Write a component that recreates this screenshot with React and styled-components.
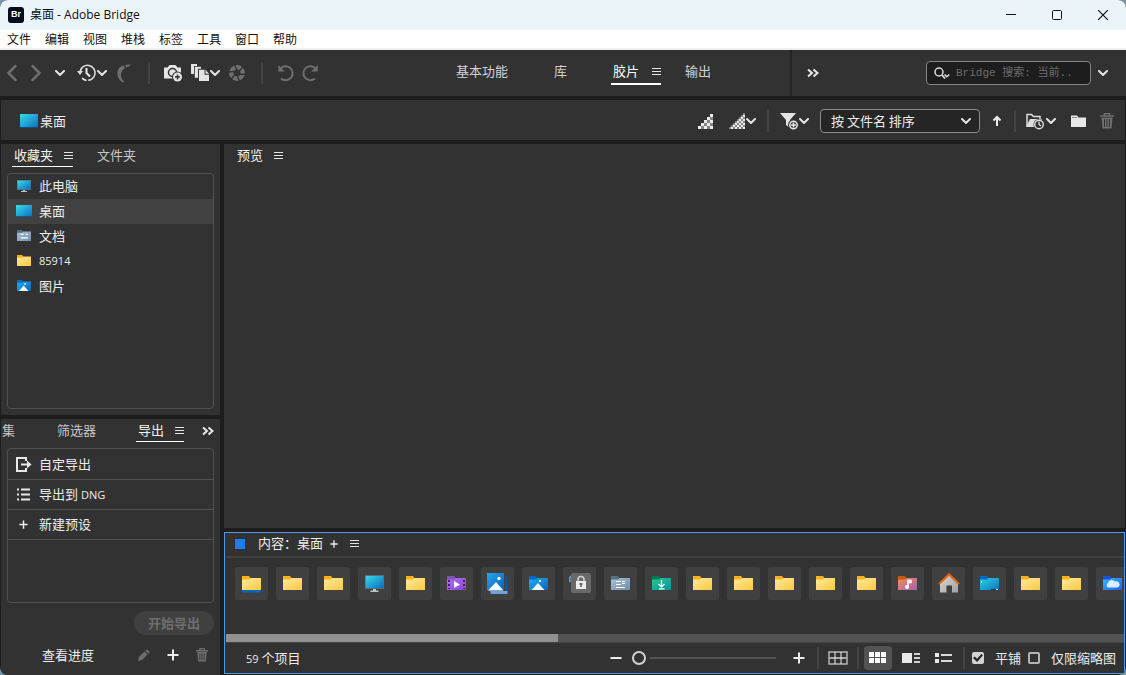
import React from "react";
import styled, { createGlobalStyle } from "styled-components";

// Data
const menuItems = ["文件", "编辑", "视图", "堆栈", "标签", "工具", "窗口", "帮助"];

const favorites = [
  { name: "此电脑", kind: "monitor" },
  { name: "桌面", kind: "desktop", selected: true },
  { name: "文档", kind: "documents" },
  { name: "85914", kind: "folder", latin: true },
  { name: "图片", kind: "pictures" },
];

const thumbnails = [
  "folderBlue", "folder", "folder", "monitor", "folder", "videos", "gallery",
  "pictures", "lock", "documents", "downloads", "folder", "folder", "folder",
  "folder", "folder", "music", "home", "desktopFolder", "folder", "folder",
  "cloud",
];

// Small glyphs
const Chevron = () => (
  <Glyph width="10" height="6" viewBox="0 0 10 6">
    <path d="M1 1l4 4 4-4" fill="none" stroke="#e4e4e4" strokeWidth="2" strokeLinecap="round" />
  </Glyph>
);

const Burger = () => (
  <Glyph width="9" height="9" viewBox="0 0 9 9">
    <path d="M0 1.5h9M0 4.5h9M0 7.5h9" stroke="#e4e4e4" strokeWidth="1" />
  </Glyph>
);

const DoubleChevron = () => (
  <Glyph width="12" height="10" viewBox="0 0 12 10">
    <path d="M1 1.5l4 3.5-4 3.5M6.5 1.5l4 3.5-4 3.5" fill="none" stroke="#e8e8e8" strokeWidth="2" />
  </Glyph>
);

const Plus = ({ size = 12 }) => (
  <Glyph width={size} height={size} viewBox="0 0 12 12">
    <path d="M6 .5v11M.5 6h11" stroke="#ededed" strokeWidth="2" />
  </Glyph>
);

const Minus = () => (
  <Glyph width="12" height="12" viewBox="0 0 12 12">
    <path d="M.5 6h11" stroke="#ededed" strokeWidth="2" />
  </Glyph>
);

const Arrow = ({ back }) => (
  <Glyph width="12" height="18" viewBox="0 0 12 18">
    <path
      d={back ? "M9.5 2l-7 7 7 7" : "M2.5 2l7 7-7 7"}
      fill="none"
      stroke="#6e6e6e"
      strokeWidth="2.5"
      strokeLinecap="round"
    />
  </Glyph>
);

const History = () => (
  <Glyph width="19" height="18" viewBox="0 0 19 18">
    <path d="M3 8.5A7.5 7.5 0 1 1 5 14" fill="none" stroke="#dedede" strokeWidth="1.5" strokeDasharray="34 2" />
    <path d="M5.5 14.5a7.5 7.5 0 0 0 4 2" fill="none" stroke="#dedede" strokeWidth="1.5" />
    <path d="M0 7h6L3 11z" fill="#dedede" />
    <path d="M9.5 4v5l3.5 3.5" fill="none" stroke="#e8e8e8" strokeWidth="2" />
  </Glyph>
);

const Boomerang = () => (
  <Glyph width="14" height="19" viewBox="0 0 14 19">
    <path d="M.5 8C1 4.5 3 2 6.5 1.5L8 4C5 6 3.5 9 4 12c.3 2 1.5 4 3 5.5L5.500 18.5C2 16 0 12 .5 8z" fill="#6e6e6e" />
    <path d="M8 1.2C10 .5 12 .5 14 .8L12.5 2.3 9.2 3.2z" fill="#6e6e6e" />
  </Glyph>
);

const Camera = () => (
  <Glyph width="20" height="18" viewBox="0 0 20 18">
    <path d="M1 3.5h3.5L6.5 1h6l2 2.5H18v11H1z" fill="#e4e4e4" />
    <circle cx="9.5" cy="8.5" r="4" fill="#e4e4e4" stroke="#323232" strokeWidth="1.5" />
    <circle cx="14.5" cy="13" r="5.5" fill="#323232" />
    <circle cx="14.5" cy="13" r="4.5" fill="#e4e4e4" />
    <path d="M14.5 10.5v5M12 13h5" stroke="#323232" strokeWidth="1.5" />
  </Glyph>
);

const Stack = () => (
  <Glyph width="18" height="18" viewBox="0 0 18 18">
    <path d="M0 0h6v2H3v8H0z" fill="#e4e4e4" />
    <path d="M3.8 2.8H10v2H7v9H3.8z" fill="#e4e4e4" />
    <path d="M8 5.8h5.5v5H18V17H8z" fill="#e4e4e4" />
    <path d="M14.5 5.8L18 9.8h-3.5z" fill="#e4e4e4" />
  </Glyph>
);

const Aperture = () => (
  <Glyph width="18" height="18" viewBox="0 0 18 18">
    <circle cx="9" cy="9" r="5.7" fill="none" stroke="#707070" strokeWidth="4.5" />
    <path d="M6 0l3 6M15.5 2l-4 5M18 10l-6.5.5M12 18l-2.5-5.5M2.5 16l4-5M0 8l6.5-.5" stroke="#323232" strokeWidth="1.3" />
  </Glyph>
);

const Rotate = ({ right }) => (
  <Glyph width="18" height="18" viewBox="0 0 18 18">
    <g transform={right ? "translate(18 0) scale(-1 1)" : undefined}>
      <path d="M3 5a7 7 0 1 1 1 9.5" fill="none" stroke="#6e6e6e" strokeWidth="2" />
      <path d="M1 1l.5 6.5H8L5.5 5z" fill="#6e6e6e" />
    </g>
  </Glyph>
);

const Search = () => (
  <Glyph width="16" height="13" viewBox="0 0 16 13">
    <circle cx="5" cy="5" r="4" fill="none" stroke="#dcdcdc" strokeWidth="1.5" />
    <path d="M8 8l3 3.5" stroke="#dcdcdc" strokeWidth="1.8" />
    <path d="M10.5 7.5l2.3 2.2 2.4-2.2" fill="none" stroke="#dcdcdc" strokeWidth="1.5" />
  </Glyph>
);

// A staircase of alternating light and grey squares
const Quality = ({ fine }) => {
  const step = fine ? 2 : 3;
  const n = fine ? 8 : 5;
  const squares = [];
  for (let row = 0; row < n; row++) {
    for (let col = n - 1 - row; col < n; col++) {
      squares.push(
        <rect
          key={`${row}-${col}`}
          x={col * step}
          y={row * step}
          width={step}
          height={step}
          fill={(row + col) % 2 ? "#868686" : "#ececec"}
        />
      );
    }
  }
  return (
    <Glyph width={n * step} height={n * step} viewBox={`0 0 ${n * step} ${n * step}`}>
      {squares}
    </Glyph>
  );
};

const Filter = () => (
  <Glyph width="18" height="18" viewBox="0 0 18 18">
    <path d="M0 1h16L10 8v8L6 13V8z" fill="#e4e4e4" />
    <circle cx="13.5" cy="13" r="5.5" fill="#323232" />
    <circle cx="13.5" cy="13" r="3.7" fill="none" stroke="#e4e4e4" strokeWidth="1.5" />
    <path d="M13.5 10.5v5M11 13h5" stroke="#e4e4e4" strokeWidth="1.6" />
  </Glyph>
);

const UpArrow = () => (
  <Glyph width="10" height="12" viewBox="0 0 10 12">
    <path d="M5 11V2M1.5 5.5L5 2l3.5 3.5" fill="none" stroke="#ededed" strokeWidth="2" />
  </Glyph>
);

const RecentFolder = () => (
  <Glyph width="19" height="17" viewBox="0 0 19 17">
    <path d="M1 13V1.5h4.5l2 2H14v3" fill="none" stroke="#dedede" strokeWidth="1.5" />
    <path d="M0 14L4 6h12v8z" fill="#dedede" />
    <circle cx="13" cy="11.5" r="5.5" fill="#323232" />
    <circle cx="13" cy="11.5" r="4.3" fill="none" stroke="#dedede" strokeWidth="1.4" />
    <path d="M13 8.5v3l2 1.5" fill="none" stroke="#dedede" strokeWidth="1.3" />
  </Glyph>
);

const NewFolder = () => (
  <Glyph width="15" height="13" viewBox="0 0 15 13">
    <path d="M0 .5h6l1.5 2H15V12H0z" fill="#e8e8e8" />
    <path d="M1 2.5h5" stroke="#8a8a8a" />
  </Glyph>
);

const Trash = ({ size = 16 }) => (
  <Glyph width={size - 2} height={size} viewBox="0 0 14 16">
    <path d="M0 3h14M4.5 2.5v-2h5v2" fill="none" stroke="#6e6e6e" strokeWidth="1.6" />
    <path d="M1.5 4.5h11l-1 11h-9z" fill="#6e6e6e" />
    <path d="M4.5 6v8M7 6v8M9.5 6v8" stroke="#323232" strokeWidth="1" />
  </Glyph>
);

const Pencil = () => (
  <Glyph width="12" height="12" viewBox="0 0 12 12">
    <path d="M0 12l1-4 5.5-5.5 3 3L4 11z" fill="#6e6e6e" />
    <path d="M7.3 1.8L9 .3l2.8 2.8-1.5 1.6z" fill="#6e6e6e" />
  </Glyph>
);

const ExportIcon = () => (
  <Glyph width="16" height="15" viewBox="0 0 16 15">
    <path d="M10 4V1H1v13h9v-3" fill="none" stroke="#e8e8e8" strokeWidth="2" />
    <path d="M5 7.5h7" stroke="#e8e8e8" strokeWidth="2" />
    <path d="M11 3.5l4.5 4-4.5 4z" fill="#e8e8e8" />
  </Glyph>
);

const ListIcon = () => (
  <Glyph width="14" height="13" viewBox="0 0 14 13">
    <path d="M0 1.5h2M0 6.5h2M0 11.5h2M4 1.5h9M4 6.5h9M4 11.5h9" stroke="#e8e8e8" strokeWidth="2" />
  </Glyph>
);

const TableIcon = () => (
  <Glyph width="20" height="14" viewBox="0 0 20 14">
    <path d="M1 1h18v12H1z" fill="none" stroke="#b4b4b4" strokeWidth="1.5" />
    <path d="M1 7h18" stroke="#a8a8a8" strokeWidth="2" />
    <path d="M7 1v12M13 1v12" stroke="#ededed" strokeWidth="1" />
  </Glyph>
);

const GridIcon = () => (
  <Glyph width="18" height="12" viewBox="0 0 18 12">
    <path d="M0 0h5v5H0zM6 0h5v5H6zM12 0h5v5h-5zM0 6h5v5H0zM6 6h5v5H6zM12 6h5v5h-5z" fill="#fff" />
  </Glyph>
);

const DetailIcon = () => (
  <Glyph width="18" height="10" viewBox="0 0 18 10">
    <path d="M0 0h10v10H0z" fill="#e8e8e8" />
    <path d="M12 1h6M12 5h6M12 9h6" stroke="#d0d0d0" strokeWidth="2" />
  </Glyph>
);

const RowsIcon = () => (
  <Glyph width="17" height="10" viewBox="0 0 17 10">
    <path d="M0 0h4v4H0zM0 6h4v4H0z" fill="#e8e8e8" />
    <path d="M6 2h11M6 8h11" stroke="#d8d8d8" strokeWidth="2" />
  </Glyph>
);

// Folder, device and place artwork. Folders share one 19x14 outline.
const folderColors = {
  folder: ["#ffe9a2", "#fcc93c", "#f8b01c"],
  folderBlue: ["#ffe9a2", "#fcc93c", "#f8b01c"],
  videos: ["#b070ee", "#8a45d8", "#7a54b8"],
  pictures: ["#22aef0", "#0a64bc", "#0468c4"],
  documents: ["#a9c0d6", "#6f8fae", "#547080"],
  downloads: ["#2ec68c", "#0894a0", "#057a58"],
  music: ["#f58f56", "#a35fb4", "#c05a14"],
  desktopFolder: ["#2fd2de", "#0a76c4", "#0468c4"],
  cloud: ["#35b8f8", "#2460f0", "#2050d8"],
};

const FolderDetail = ({ kind, small }) => {
  switch (kind) {
    case "folderBlue":
      return <path d="M0 14h19v2.5H0z" fill="#0868b8" />;
    case "videos":
      return (
        <>
          <path d="M7 5v7l6-3.5z" fill="#fff" />
          <path d="M2 4v9M17 4v9" stroke="#3f2468" strokeWidth="2" strokeDasharray="2 2" />
        </>
      );
    case "pictures":
      return (
        <>
          <path d="M2.5 14L9 7l6.5 7z" fill="#eef6ff" />
          <rect x="10" y="4" width="2" height="2" fill="#fff" />
        </>
      );
    case "documents":
      return small ? (
        <path d="M5 5.5h4M12 5.5h3M5 10h10" stroke="#fff" strokeWidth="1.7" />
      ) : (
        <path d="M5 5.5h5M5 8.5h5M5 11.5h9M11 5.5h3M11 7.5h3" stroke="#fff" strokeWidth="1.2" />
      );
    case "downloads":
      return <path d="M9.5 4v7M6.5 8l3 3 3-3M7 12.8h5.5" fill="none" stroke="#fff" strokeWidth="1.2" />;
    case "music":
      return (
        <>
          <path d="M10 11V4.5h3v2h-2" fill="none" stroke="#fff" strokeWidth="1.5" />
          <circle cx="9" cy="11" r="2" fill="#fff" />
        </>
      );
    case "desktopFolder":
      return (
        <>
          <path d="M1 5h1v2H1z" fill="#fff" />
          <path d="M11 13h8v1h-8z" fill="#0b3560" />
          <path d="M16 13h2v1h-2z" fill="#fff" />
        </>
      );
    case "cloud":
      return <path d="M5 11.5a2.5 2.5 0 0 1 0-4.5A4 4 0 0 1 12 5.5 3 3 0 0 1 14.5 11.5z" fill="#d8f0ff" />;
    default:
      return null;
  }
};

const Artwork = ({ kind, small, id }) => {
  const fill = `url(#${id})`;
  const gradient = (from, to) => (
    <defs>
      <linearGradient id={id} x1="0" y1="0" x2="1" y2="1">
        <stop offset="0" stopColor={from} />
        <stop offset="1" stopColor={to} />
      </linearGradient>
    </defs>
  );

  if (kind === "desktop") {
    return (
      <Glyph width={small ? 16 : 18} height={small ? 12 : 14} viewBox="0 0 18 14" preserveAspectRatio="none">
        {gradient("#38dce8", "#0a6cc0")}
        <path d="M0 0h18v14H0z" fill={fill} />
        <path d="M0 13h18v1H0z" fill="#0c4a80" />
      </Glyph>
    );
  }
  if (kind === "monitor") {
    return (
      <Glyph width={small ? 14 : 19} height={small ? 12 : 17} viewBox="0 0 19 17" preserveAspectRatio="none">
        {gradient("#38dce8", "#0a6cc0")}
        <path d="M0 0h19v14H0z" fill="#51707c" />
        <path d="M.7 1h17.6v12H.7z" fill={fill} />
        <path d="M8 14h3v1.5h2.5V17h-8v-1.5H8z" fill="#b6c6ce" />
      </Glyph>
    );
  }
  if (kind === "gallery") {
    return (
      <Glyph width="21" height="21" viewBox="0 0 21 21">
        {gradient("#28a4ee", "#0860b4")}
        <path d="M18 3h3v15h-3z" fill="#0656a4" />
        <path d="M3 18h17.5v3H4z" fill="#6ea2dc" />
        <path d="M0 0h17v17.5H0z" fill={fill} />
        <path d="M1 17.5L9 9l7.5 8.5z" fill="#eef6ff" />
        <circle cx="12" cy="5.5" r="1.7" fill="#fff" />
      </Glyph>
    );
  }
  if (kind === "lock") {
    return (
      <Glyph width="22" height="20" viewBox="0 0 22 20">
        <path d="M2 3Q0 5 1 9" fill="none" stroke="#52b4d8" strokeWidth="1.5" />
        <rect x="2" width="20" height="20" rx="2" fill="#696969" />
        <path d="M9 9V6.5a3 3 0 0 1 6 0V9" fill="none" stroke="#d4d4d4" strokeWidth="1.6" />
        <path d="M7 8h10v8H7z" fill="#ececec" />
        <path d="M12 10v4M10.5 11h3" stroke="#5a5a5a" strokeWidth="1.5" />
      </Glyph>
    );
  }
  if (kind === "home") {
    return (
      <Glyph width="22" height="20" viewBox="0 0 22 20">
        {gradient("#d8d8d8", "#a2a2a2")}
        <path d="M2 10l9-8 9 8v9.5h-6V12.5H8.5v7H2z" fill={fill} />
        <path d="M1 11L11 1.5 21 11" fill="none" stroke="#e4680c" strokeWidth="2.2" />
      </Glyph>
    );
  }

  const [from, to, tab] = folderColors[kind];
  const tall = kind === "folderBlue";
  return (
    <Glyph
      width={small ? 14 : 19}
      height={small ? 11 : tall ? 20 : 14}
      viewBox={tall ? "0 -3 19 20" : "0 0 19 14"}
      preserveAspectRatio="none"
    >
      {gradient(from, to)}
      <path d="M0 0h7l1.5 2V4H0z" fill={tab} />
      <path d="M0 3.5h7L8.5 2H19v12H0z" fill={fill} />
      <FolderDetail kind={kind} small={small} />
    </Glyph>
  );
};

// Window chrome
const TitleBar = () => (
  <TitleRow>
    <BrandMark>Br</BrandMark>
    <WindowTitle>桌面 - Adobe Bridge</WindowTitle>
    <WindowButton aria-label="最小化">
      <svg width="10" height="10" viewBox="0 0 10 10"><path d="M0 4.5h10" stroke="#111" /></svg>
    </WindowButton>
    <WindowButton aria-label="最大化">
      <svg width="10" height="10" viewBox="0 0 10 10"><rect x=".5" y=".5" width="9" height="9" rx="1" fill="none" stroke="#111" /></svg>
    </WindowButton>
    <WindowButton aria-label="关闭">
      <svg width="10" height="10" viewBox="0 0 10 10"><path d="M0 0l10 10M10 0L0 10" stroke="#111" strokeWidth="1.2" /></svg>
    </WindowButton>
  </TitleRow>
);

const MainToolbar = () => (
  <Toolbar>
    <ToolGroup>
      <ToolButton aria-label="后退"><Arrow back /></ToolButton>
      <ToolButton aria-label="前进"><Arrow /></ToolButton>
      <ToolButton aria-label="转到父项"><Chevron /></ToolButton>
      <ToolButton $wide aria-label="最近使用"><History /><Chevron /></ToolButton>
      <ToolButton aria-label="返回 Photoshop"><Boomerang /></ToolButton>
      <Divider $spaced />
      <ToolButton aria-label="从相机获取照片"><Camera /></ToolButton>
      <ToolButton $wide aria-label="优化"><Stack /><Chevron /></ToolButton>
      <ToolButton aria-label="在 Camera Raw 中打开"><Aperture /></ToolButton>
      <Divider $spaced />
      <ToolButton aria-label="逆时针旋转"><Rotate /></ToolButton>
      <ToolButton aria-label="顺时针旋转"><Rotate right /></ToolButton>
    </ToolGroup>
    <Workspaces>
      <WorkspaceTab>基本功能</WorkspaceTab>
      <WorkspaceTab>库</WorkspaceTab>
      <WorkspaceTab $active>胶片<Burger /></WorkspaceTab>
      <WorkspaceTab>输出</WorkspaceTab>
    </Workspaces>
    <SearchArea>
      <ToolButton aria-label="更多工作区"><DoubleChevron /></ToolButton>
      <SearchBox>
        <Search />
        <SearchInput aria-label="搜索" placeholder="Bridge 搜索: 当前.." />
      </SearchBox>
      <ToolButton aria-label="搜索选项"><Chevron /></ToolButton>
    </SearchArea>
  </Toolbar>
);

const PathBar = () => (
  <PathRow>
    <Crumb href="#desktop">
      <Artwork kind="desktop" id="crumb" />
      桌面
    </Crumb>
    <PathTools>
      <ToolButton aria-label="快速缩览图"><Quality /></ToolButton>
      <ToolButton $wide aria-label="缩览图品质"><Quality fine /><Chevron /></ToolButton>
      <Divider />
      <ToolButton $wide aria-label="筛选"><Filter /><Chevron /></ToolButton>
      <SortField>
        <SortSelect aria-label="排序方式" defaultValue="name">
          <option value="name">按 文件名 排序</option>
        </SortSelect>
        <Chevron />
      </SortField>
      <ToolButton aria-label="升序"><UpArrow /></ToolButton>
      <Divider />
      <ToolButton $wide aria-label="打开最近文件"><RecentFolder /><Chevron /></ToolButton>
      <ToolButton aria-label="新建文件夹"><NewFolder /></ToolButton>
      <ToolButton aria-label="删除"><Trash /></ToolButton>
    </PathTools>
  </PathRow>
);

const FavoritesPanel = () => (
  <Panel $grow>
    <PanelTabs>
      <PanelTab $active>收藏夹<Burger /></PanelTab>
      <PanelTab $muted>文件夹</PanelTab>
    </PanelTabs>
    <FavoriteList>
      {favorites.map((item) => (
        <FavoriteItem key={item.name} $selected={item.selected}>
          <IconCell><Artwork kind={item.kind} small id={`fav-${item.kind}`} /></IconCell>
          {item.latin ? <Latin>{item.name}</Latin> : item.name}
        </FavoriteItem>
      ))}
    </FavoriteList>
  </Panel>
);

const ExportPanel = () => (
  <Panel>
    <ExportTabs>
      <PanelTab $muted>集</PanelTab>
      <PanelTab $muted>筛选器</PanelTab>
      <PanelTab $active>导出<Burger /></PanelTab>
      <IconButton aria-label="更多面板"><DoubleChevron /></IconButton>
    </ExportTabs>
    <PresetList>
      <PresetItem><IconCell><ExportIcon /></IconCell>自定导出</PresetItem>
      <PresetItem><IconCell><ListIcon /></IconCell><span>导出到 <Latin>DNG</Latin></span></PresetItem>
      <PresetItem><IconCell><Plus size={9} /></IconCell>新建预设</PresetItem>
    </PresetList>
    <StartButton disabled>开始导出</StartButton>
    <ExportFooter>
      <ProgressLink href="#progress">查看进度</ProgressLink>
      <IconButton aria-label="编辑预设"><Pencil /></IconButton>
      <IconButton aria-label="添加预设"><Plus /></IconButton>
      <IconButton aria-label="删除预设"><Trash size={14} /></IconButton>
    </ExportFooter>
  </Panel>
);

const ContentPanel = () => (
  <ContentFrame>
    <ContentHeader>
      <BlueSquare />
      <span>内容：桌面</span>
      <IconButton aria-label="新建内容面板"><Plus size={8} /></IconButton>
      <IconButton aria-label="面板菜单"><Burger /></IconButton>
    </ContentHeader>
    <Filmstrip>
      {thumbnails.map((kind, i) => (
        <Thumbnail key={i} aria-label={kind}>
          <Artwork kind={kind} id={`thumb-${i}`} />
        </Thumbnail>
      ))}
    </Filmstrip>
    <ScrollTrack><ScrollThumb /></ScrollTrack>
    <StatusBar>
      <ItemCount><Latin>59</Latin> 个项目</ItemCount>
      <IconButton aria-label="缩小"><Minus /></IconButton>
      <SizeSlider aria-label="缩览图大小" type="range" min="0" max="100" defaultValue="0" />
      <IconButton aria-label="放大"><Plus /></IconButton>
      <Divider />
      <ViewButton aria-label="锁定网格"><TableIcon /></ViewButton>
      <Divider />
      <ViewButtons>
        <ViewButton $active aria-label="缩览图视图"><GridIcon /></ViewButton>
        <ViewButton aria-label="详细信息视图"><DetailIcon /></ViewButton>
        <ViewButton aria-label="列表视图"><RowsIcon /></ViewButton>
      </ViewButtons>
      <Divider />
      <CheckLabel><Checkbox type="checkbox" defaultChecked />平铺</CheckLabel>
      <CheckLabel><Checkbox type="checkbox" />仅限缩略图</CheckLabel>
    </StatusBar>
  </ContentFrame>
);

export default function App() {
  return (
    <>
      <GlobalStyle />
      <Window>
        <TitleBar />
        <MenuBar>
          {menuItems.map((item) => (
            <MenuButton key={item}>{item}</MenuButton>
          ))}
        </MenuBar>
        <MainToolbar />
        <PathBar />
        <Workspace>
          <Sidebar>
            <FavoritesPanel />
            <ExportPanel />
          </Sidebar>
          <MainColumn>
            <PreviewPanel>
              <PanelTab>预览<Burger /></PanelTab>
            </PreviewPanel>
            <ContentPanel />
          </MainColumn>
        </Workspace>
      </Window>
    </>
  );
}

// Styled Components
const GlobalStyle = createGlobalStyle`
  * {
    box-sizing: border-box;
  }

  body {
    margin: 0;
    background: #7596a6;
    color: #ededed;
    font: 13px/20px "Noto Sans CJK SC", sans-serif;
  }

  button, input, select {
    font: inherit;
    color: inherit;
  }

  button {
    padding: 0;
    border: 0;
    background: none;
  }

  a {
    color: inherit;
    text-decoration: none;
  }
`;

const Glyph = styled.svg`
  display: block;
  flex: none;
`;

const Latin = styled.span`
  font-family: "Open Sans", sans-serif;
  font-size: 11px;
`;

const Window = styled.div`
  display: flex;
  flex-direction: column;
  height: 100vh;
  min-height: 560px;
  background: #1d1d1d;
  border-radius: 8px;
  overflow: hidden;
`;

const TitleRow = styled.header`
  display: flex;
  align-items: center;
  height: 30px;
  flex: none;
  padding-left: 8px;
  background: #ebf4f9;
  color: #111;
`;

const BrandMark = styled.div`
  width: 16px;
  height: 16px;
  border-radius: 3px;
  background: #000b1d;
  color: #fff;
  font: bold 9px/15px "Liberation Sans", sans-serif;
  text-align: center;
`;

const WindowTitle = styled.span`
  flex: 1;
  margin-left: 6px;
  font-family: "Open Sans", "Noto Sans CJK SC", sans-serif;
  font-size: 12px;
`;

const WindowButton = styled.button`
  display: flex;
  align-items: center;
  justify-content: center;
  width: 46px;
  height: 30px;
`;

const MenuBar = styled.nav`
  display: flex;
  gap: 14px;
  height: 20px;
  flex: none;
  padding-left: 7px;
  background: #fff;
  border-bottom: 2px solid #f0f0f0;
`;

const MenuButton = styled.button`
  color: #111;
  font-size: 12px;
  line-height: 18px;
`;

const Toolbar = styled.div`
  display: flex;
  height: 46px;
  flex: none;
  background: #323232;
`;

const ToolGroup = styled.div`
  display: flex;
  align-items: center;
`;

const ToolButton = styled.button`
  display: flex;
  align-items: center;
  justify-content: center;
  gap: 1px;
  width: ${(props) => (props.$wide ? "40px" : "24px")};
  height: 24px;
  flex: none;
`;

const Divider = styled.div`
  width: 2px;
  height: 22px;
  flex: none;
  margin: ${(props) => (props.$spaced ? "0 11px 0 12px" : "0")};
  background: #444;
`;

const Workspaces = styled.nav`
  display: flex;
  flex: 1;
  justify-content: flex-end;
  align-items: flex-start;
  gap: 22px;
  padding: 11px 79px 0 0;
`;

const WorkspaceTab = styled.button`
  display: flex;
  align-items: center;
  gap: 13px;
  height: 24px;
  padding: 0 0 2px 2px;
  color: ${(props) => (props.$active ? "#fff" : "#d2d2d2")};
  border-bottom: 2px solid ${(props) => (props.$active ? "#fff" : "transparent")};

  &:nth-child(-n + 2) {
    margin-right: 22px;
  }
`;

const SearchArea = styled.div`
  display: flex;
  align-items: center;
  flex: 0 0 336px;
  padding: 0 11px 0 9px;
  border-left: 2px solid #252525;
`;

const SearchBox = styled.label`
  display: flex;
  align-items: center;
  gap: 6px;
  width: 165px;
  height: 24px;
  margin-left: auto;
  padding: 0 7px;
  border: 1px solid #858585;
  border-radius: 4px;
  background: #1d1d1d;
`;

const SearchInput = styled.input`
  flex: 1;
  min-width: 0;
  padding: 0;
  border: 0;
  outline: 0;
  background: none;
  font-family: "Liberation Mono", "Noto Sans CJK SC", monospace;
  font-size: 11px;
  line-height: 18px;

  &::placeholder {
    color: #6c6c6c;
  }
`;

const PathRow = styled.div`
  display: flex;
  align-items: center;
  justify-content: space-between;
  height: 40px;
  flex: none;
  margin: 4px 1px;
  padding: 2px 6px 0 19px;
  background: #323232;
`;

const Crumb = styled.a`
  display: flex;
  align-items: center;
  gap: 2px;
`;

const PathTools = styled.div`
  display: flex;
  align-items: center;
  gap: 5px;
`;

const SortField = styled.label`
  display: flex;
  align-items: center;
  width: 160px;
  height: 24px;
  margin-left: 1px;
  padding-right: 8px;
  border: 1px solid #8c8c8c;
  border-radius: 4px;
  background: #252525;
`;

const SortSelect = styled.select`
  flex: 1;
  height: 22px;
  padding: 0 0 0 10px;
  border: 0;
  outline: 0;
  appearance: none;
  background: none;
`;

const Workspace = styled.main`
  display: flex;
  flex: 1;
  gap: 4px;
  min-height: 0;
  padding: 0 1px;
`;

const Sidebar = styled.aside`
  display: flex;
  flex-direction: column;
  flex: 0 0 219px;
  gap: 4px;
`;

const Panel = styled.section`
  display: flex;
  flex-direction: column;
  flex: ${(props) => (props.$grow ? "1" : "none")};
  min-height: 0;
  padding: 0 6px ${(props) => (props.$grow ? "6px" : "8px")};
  background: #323232;
`;

const PanelTabs = styled.div`
  display: flex;
  gap: 22px;
  padding-left: 5px;
  margin-bottom: 6px;
`;

const ExportTabs = styled(PanelTabs)`
  gap: 0;
  height: 23px;
  margin: 0 0 6px -7px;
  padding-left: 0;

  button:nth-child(2),
  button:nth-child(3) {
    margin-left: 40px;
  }

  button:last-child {
    margin-left: auto;
  }
`;

const PanelTab = styled.button`
  display: flex;
  align-items: center;
  gap: 11px;
  height: 23px;
  flex: none;
  padding: 0 0 0 2px;
  color: ${(props) => (props.$muted ? "#c6c6c6" : "#f2f2f2")};
  border-bottom: 1px solid ${(props) => (props.$active ? "#fff" : "transparent")};
`;

const FavoriteList = styled.ul`
  flex: 1;
  margin: 0;
  padding: 0;
  border: 1px solid #515151;
  border-radius: 4px;
  list-style: none;
`;

const FavoriteItem = styled.li`
  display: flex;
  align-items: center;
  height: 25px;
  padding-bottom: 2px;
  background: ${(props) => (props.$selected ? "#414141" : "none")};
`;

const IconCell = styled.span`
  display: flex;
  justify-content: center;
  width: 31px;
`;

const PresetList = styled.div`
  height: 155px;
  padding-top: 1px;
  border: 1px solid #515151;
  border-radius: 4px;
`;

const PresetItem = styled.button`
  display: flex;
  align-items: center;
  width: 100%;
  height: 30px;
  padding-bottom: 1px;
  border-bottom: 1px solid #515151;
`;

const StartButton = styled.button`
  align-self: flex-end;
  width: 80px;
  height: 24px;
  margin-top: 8px;
  border-radius: 12px;
  background: #404040;
  color: #6e6e6e;
  font-weight: bold;
`;

const ExportFooter = styled.div`
  display: flex;
  align-items: center;
  gap: 5px;
  margin-top: 8px;
  padding-left: 35px;
`;

const ProgressLink = styled.a`
  margin-right: auto;
`;

const IconButton = styled.button`
  display: flex;
  align-items: center;
  justify-content: center;
  min-width: 12px;
  height: 24px;

  ${ExportFooter} & {
    width: 24px;
  }
`;

const MainColumn = styled.div`
  display: flex;
  flex-direction: column;
  flex: 1;
  gap: 4px;
  min-width: 0;
  padding-bottom: 1px;
`;

const PreviewPanel = styled.section`
  flex: 1;
  padding-left: 11px;
  background: #323232;
`;

const ContentFrame = styled.section`
  display: flex;
  flex-direction: column;
  border: 1px solid #4c9af0;
  background: #323232;
`;

const ContentHeader = styled.div`
  display: flex;
  align-items: center;
  height: 25px;
  padding: 0 10px 2px;
  border-bottom: 2px solid #404040;

  span {
    margin: 0 5px 0 13px;
    line-height: 18px;
    padding-bottom: 2px;
  }

  button + button {
    margin-left: 8px;
  }
`;

const BlueSquare = styled.div`
  width: 10px;
  height: 10px;
  background: #1f7cf0;
`;

const Filmstrip = styled.div`
  display: flex;
  gap: 8px;
  height: 76px;
  padding: 9px 0 0 10px;
  overflow: hidden;
`;

const Thumbnail = styled.button`
  display: flex;
  align-items: center;
  justify-content: center;
  flex: 0 0 33px;
  height: 33px;
  padding-bottom: 1px;
  border-radius: 2px;
  background: #404040;
`;

const ScrollTrack = styled.div`
  height: 9px;
  margin-left: 1px;
  background: #535353;
  border-bottom: 1px solid #454545;
`;

const ScrollThumb = styled.div`
  width: 37%;
  height: 8px;
  background: #919191;
`;

const StatusBar = styled.footer`
  display: flex;
  align-items: center;
  height: 30px;
  padding-right: 8px;
`;

const ItemCount = styled.span`
  flex: 1;
  padding-left: 21px;
`;

const SizeSlider = styled.input`
  appearance: none;
  width: 144px;
  height: 20px;
  margin: 0 17px 0 10px;
  background: none;
  overflow: hidden;

  &::-webkit-slider-runnable-track {
    height: 2px;
    background: #535353;
  }

  &::-webkit-slider-thumb {
    appearance: none;
    width: 14px;
    height: 14px;
    margin-top: -6px;
    border: 2px solid #d2d2d2;
    border-radius: 50%;
    background: #323232;
    box-shadow: 0 0 0 4px #323232;
  }

  & + button {
    margin-right: 12px;
  }
`;

const ViewButton = styled.button`
  display: flex;
  align-items: center;
  justify-content: center;
  width: 28px;
  height: 24px;
  border-radius: 4px;
  background: ${(props) => (props.$active ? "#535353" : "none")};

  ${StatusBar} > & {
    width: 38px;
  }
`;

const ViewButtons = styled.div`
  display: flex;
  gap: 5px;
  padding: 0 5px;
`;

const CheckLabel = styled.label`
  display: flex;
  align-items: center;
  gap: 11px;
  margin-left: 7px;
`;

const Checkbox = styled.input`
  display: flex;
  align-items: center;
  justify-content: center;
  appearance: none;
  width: 12px;
  height: 12px;
  margin: 0;
  border: 2px solid #b4b4b4;
  border-radius: 2px;

  &:checked {
    border-color: #d2d2d2;
    background: #d2d2d2;
  }

  &:checked::after {
    content: "";
    width: 10px;
    height: 8px;
    flex: none;
    background: #222;
    clip-path: polygon(0 50%, 18% 32%, 40% 58%, 85% 0, 100% 16%, 42% 100%);
  }
`;
